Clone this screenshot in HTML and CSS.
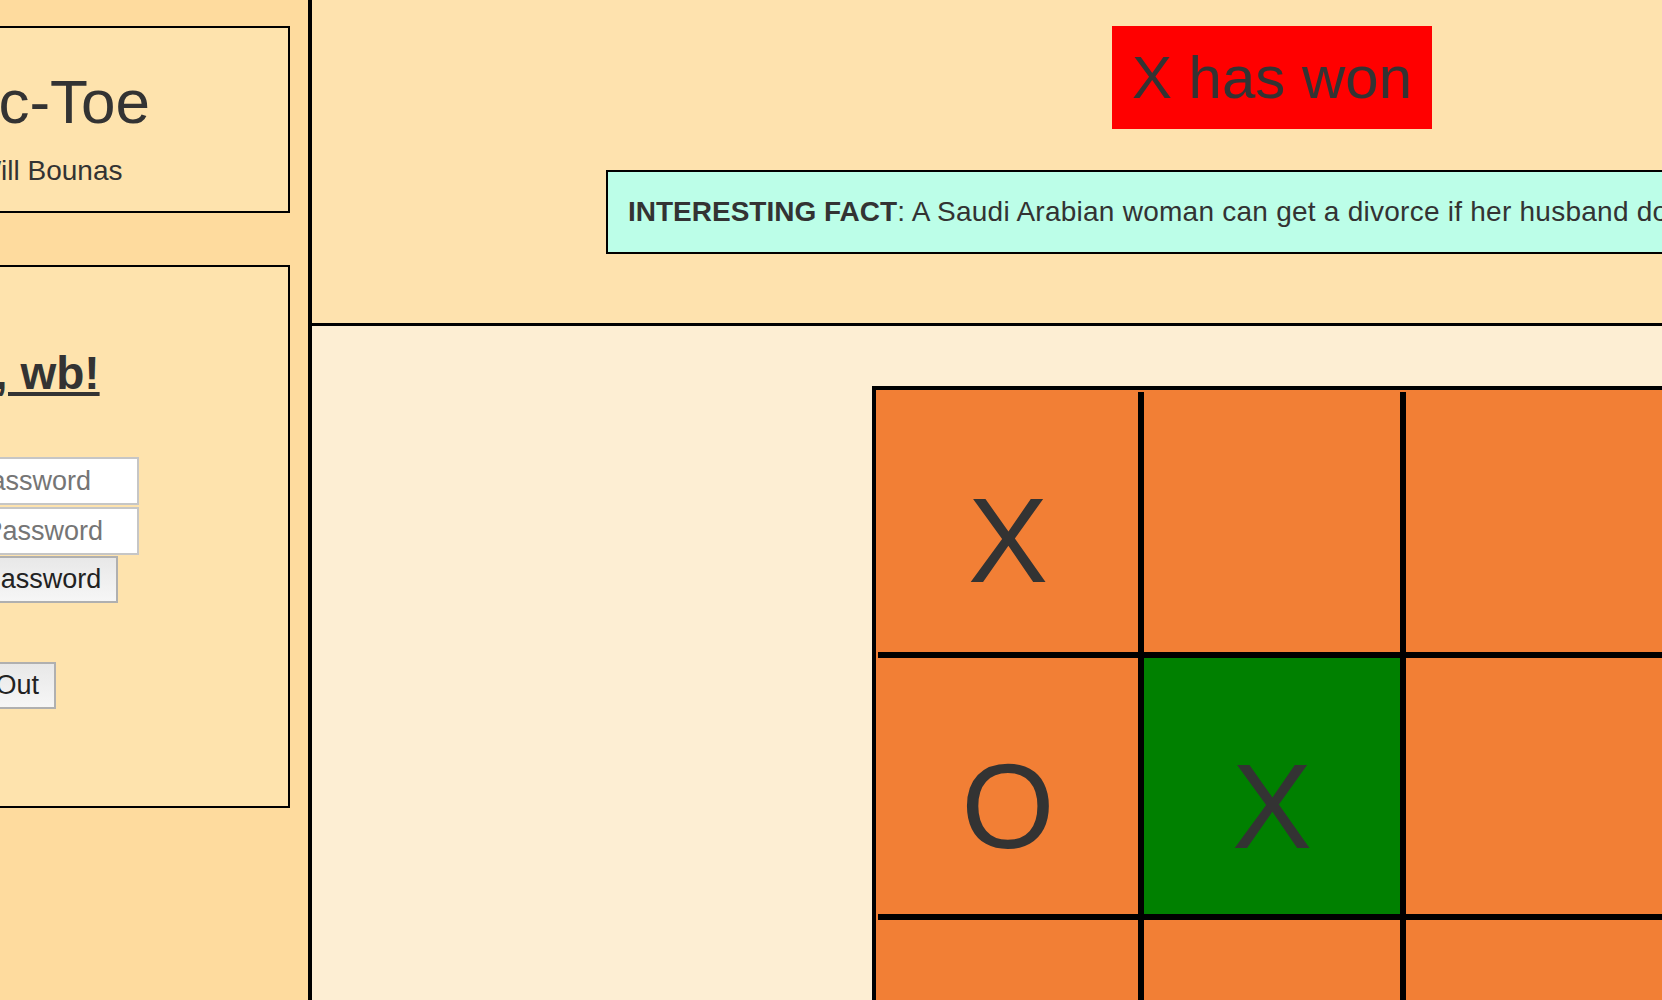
FILE: index.html
```html
<!DOCTYPE html>
<html lang="en">
<head>
<meta charset="utf-8">
<title>Tic-Tac-Toe</title>
<link rel="stylesheet" href="styles.css">
</head>
<body>
<div class="page">
  <aside class="sidebar">
    <section class="panel title-panel">
      <h1 class="title">Tic-Tac-Toe</h1>
      <p class="byline">Made by Will Bounas</p>
    </section>
    <section class="panel account-panel">
      <h2 class="greeting"><a href="#">Hello, wb!</a></h2>
      <form class="pw-form">
        <input class="field" type="password" placeholder="Old Password">
        <input class="field field-second" type="password" placeholder="New Password">
        <button class="btn" type="button">Change Password</button>
      </form>
      <button class="btn logout" type="button">Log Out</button>
    </section>
  </aside>
  <main class="main">
    <header class="status">
      <h1 class="winner">X has won</h1>
      <div class="fact"><strong>INTERESTING FACT</strong>: A Saudi Arabian woman can get a divorce if her husband doesn't give her coffee.</div>
    </header>
    <section class="board-area">
      <div class="board">
        <div class="grid">
          <div class="cell">X</div>
          <div class="cell"></div>
          <div class="cell"></div>
          <div class="cell">O</div>
          <div class="cell win">X</div>
          <div class="cell"></div>
          <div class="cell"></div>
          <div class="cell"></div>
          <div class="cell"></div>
        </div>
      </div>
    </section>
  </main>
</div>
</body>
</html>
```

FILE: styles.css
```css
html, body {
  margin: 0;
  padding: 0;
  overflow: hidden;
  height: 1000px;
}

body {
  font-family: "Liberation Sans", Arial, Helvetica, sans-serif;
  color: #333;
  background: #fdeed3;
}

.page {
  display: flex;
  align-items: stretch;
  margin-left: -326px;
  min-height: 1000px;
}

/* ---------- sidebar ---------- */
.sidebar {
  flex: 0 0 598px;
  background: #fedb9e;
  border-right: 4px solid #000;
  padding: 26px 18px 0;
  display: flex;
  flex-direction: column;
  gap: 52px;
}

.panel {
  background: #fee3ad;
  border: 2px solid #000;
  text-align: center;
}

.title-panel {
  height: 183px;
}

.title {
  font-size: 62px;
  font-weight: normal;
  margin: 38px 0 0;
  line-height: 71px;
}

.byline {
  font-size: 28px;
  margin: 18px 0 0;
  line-height: 32px;
}

.account-panel {
  height: 539px;
  display: flex;
  flex-direction: column;
  align-items: center;
}

.greeting {
  font-size: 46px;
  font-weight: bold;
  margin: 80px 0 0;
  line-height: 53px;
}

.greeting a {
  color: #333;
  text-decoration: underline;
  text-decoration-thickness: 4px;
  text-underline-offset: 3px;
}

.pw-form {
  display: flex;
  flex-direction: column;
  align-items: center;
  margin-top: 57px;
}

.field {
  width: 224px;
  height: 48px;
  box-sizing: border-box;
  margin: 0 0 2px 72px;
  padding: 0 6px;
  border: 2px solid #c6c6c6;
  background: #fff;
  font: 27px "Liberation Sans", Arial, sans-serif;
  color: #333;
}

.field::placeholder {
  color: #757575;
}

.field-second {
  margin-bottom: 1px;
}

.btn {
  height: 47px;
  box-sizing: border-box;
  padding: 0 15px;
  border: 2px solid #b0b0b0;
  background: linear-gradient(#e8e8e8, #f6f6f6);
  font: 27px "Liberation Sans", Arial, sans-serif;
  color: #222;
}

.logout {
  margin-top: 59px;
}

/* ---------- main ---------- */
.main {
  flex: 0 0 1920px;
  display: flex;
  flex-direction: column;
}

.status {
  background: #fee2ae;
  border-bottom: 3px solid #000;
  display: flex;
  flex-direction: column;
  align-items: center;
  padding-top: 26px;
  height: 297px;
}

.winner {
  margin: 0;
  background: #ff0000;
  font-size: 60px;
  font-weight: normal;
  line-height: 69px;
  padding: 17px 20px;
}

.fact {
  margin-top: 41px;
  width: 1332px;
  box-sizing: border-box;
  background: #bcfee8;
  border: 2px solid #000;
  padding: 24px 20px;
  font-size: 28px;
  line-height: 32px;
  letter-spacing: 0.25px;
  white-space: nowrap;
  overflow: hidden;
}

.fact strong {
  font-weight: bold;
  letter-spacing: 0;
}

.board-area {
  padding-top: 60px;
  display: flex;
  justify-content: center;
}

.board {
  border: 4px solid #000;
  padding: 2px;
  background: #f27f35;
}

.grid {
  display: grid;
  grid-template-columns: 260px 256px 260px;
  grid-template-rows: 260px 256px 260px;
  gap: 6px;
  background: #000;
}

.cell {
  background: #f27f35;
  box-sizing: border-box;
  padding-top: 82px;
  text-align: center;
  font-size: 120px;
  line-height: 133px;
  color: #333;
}

.cell.win {
  background: #008000;
}
```
